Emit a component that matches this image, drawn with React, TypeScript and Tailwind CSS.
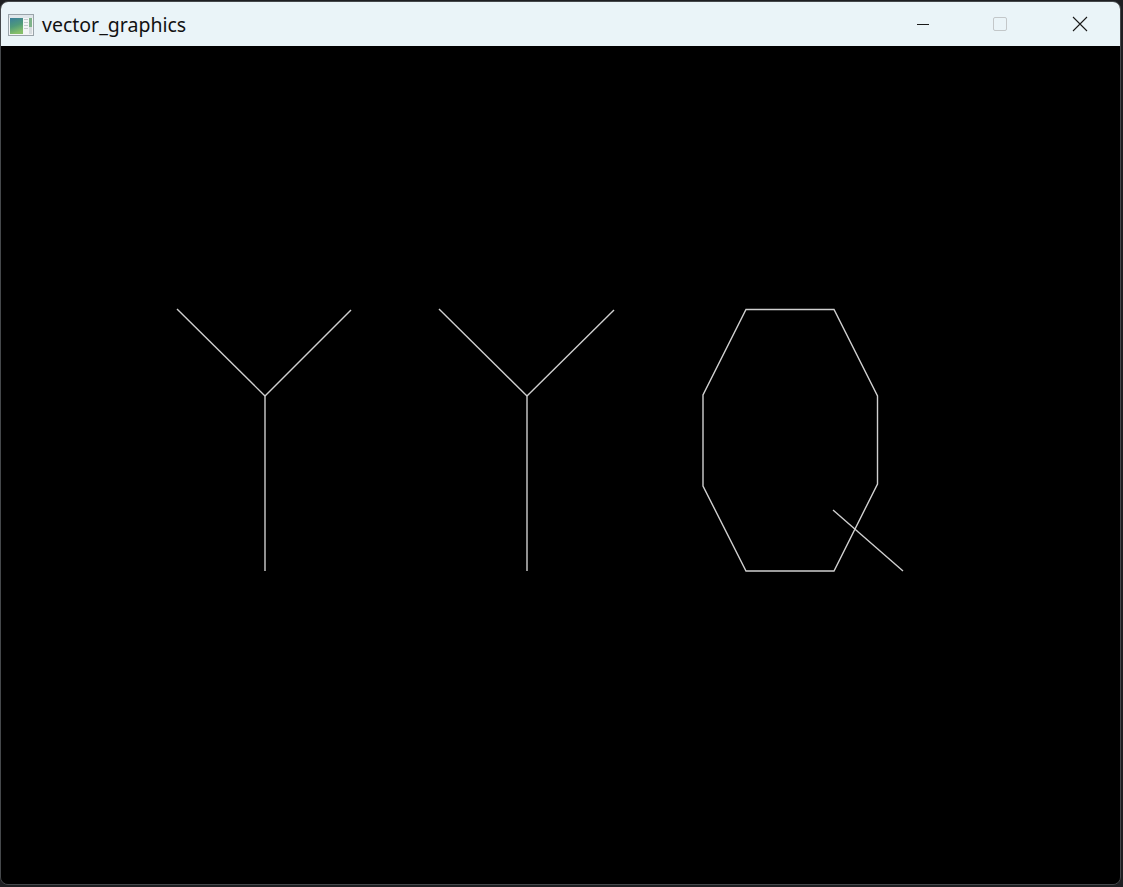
const AppIcon = () => (
  <svg width="26" height="22" viewBox="0 0 26 22">
    <defs>
      <linearGradient id="pane" x1="0" y1="0" x2="0.3" y2="1">
        <stop offset="0" stopColor="#3b7f9c" />
        <stop offset="0.55" stopColor="#4f9a7a" />
        <stop offset="1" stopColor="#86bf6a" />
      </linearGradient>
    </defs>
    <rect x="0.5" y="0.5" width="25" height="21" fill="#f3f5f6" stroke="#9aa4aa" />
    <rect x="1" y="1" width="24" height="3" fill="#dfe6ea" />
    <rect x="2" y="4" width="13" height="16" fill="url(#pane)" />
    <rect x="16" y="5" width="4" height="1" fill="#c4cacd" />
    <rect x="16" y="8" width="4" height="1" fill="#c4cacd" />
    <rect x="16" y="11" width="4" height="1" fill="#c4cacd" />
    <rect x="16" y="14" width="4" height="1" fill="#c4cacd" />
    <rect x="21" y="4" width="3" height="9" fill="#7fb48a" />
    <rect x="21" y="13" width="3" height="7" fill="#d6dcdf" />
  </svg>
);

const lines: [number, number, number, number][] = [
  // first Y
  [177, 309, 265, 396],
  [351, 310, 265, 396],
  [265, 396, 265, 571],
  // second Y
  [439, 309, 527, 396],
  [614, 310, 527, 396],
  [527, 396, 527, 571],
  // tail of Q
  [833, 510, 903, 571],
];

const App = () => {
  return (
    <div className="w-[1123px] h-[887px] bg-[#1e1f22] overflow-hidden">
      <div className="mt-px w-[1121px] h-[884px] border border-[#45484b] rounded-lg overflow-hidden flex flex-col">
        <div className="h-[44px] shrink-0 bg-[#eaf4f8] flex items-center">
          <div className="pl-[7px] pr-[8px] flex items-center pt-px">
            <AppIcon />
          </div>
          <span className="text-[19.5px] text-[#111] font-['Segoe_UI','Noto_Sans','Open_Sans',sans-serif] leading-none mt-[2px]">
            vector_graphics
          </span>
          <div className="ml-auto flex h-full">
            <div className="w-[80px] h-full flex items-center justify-center pl-[4px]">
              <div className="w-[12px] h-px bg-[#1a1a1a]" />
            </div>
            <div className="w-[80px] h-full flex items-center justify-center pr-[2px]">
              <div className="w-[14px] h-[14px] rounded-[2px] border border-[#c3c7c9]" />
            </div>
            <div className="w-[79px] h-full flex items-center justify-center pr-[1px]">
              <svg width="16" height="16" viewBox="0 0 16 16">
                <path d="M1 1 L15 15 M15 1 L1 15" stroke="#1a1a1a" strokeWidth="1.1" fill="none" />
              </svg>
            </div>
          </div>
        </div>
        <div className="flex-1 bg-black">
          <svg width="1119" height="838" viewBox="1 46 1119 838" className="block">
            <g stroke="#cfcfcf" strokeWidth="1.4" fill="none">
              {lines.map(([x1, y1, x2, y2], i) => (
                <line key={i} x1={x1} y1={y1} x2={x2} y2={y2} />
              ))}
              <polygon points="746,309.5 834,309.5 877.5,396 877.5,484 834,571 746,571 703,486 703,395" />
            </g>
          </svg>
        </div>
      </div>
    </div>
  );
};

export default App;
